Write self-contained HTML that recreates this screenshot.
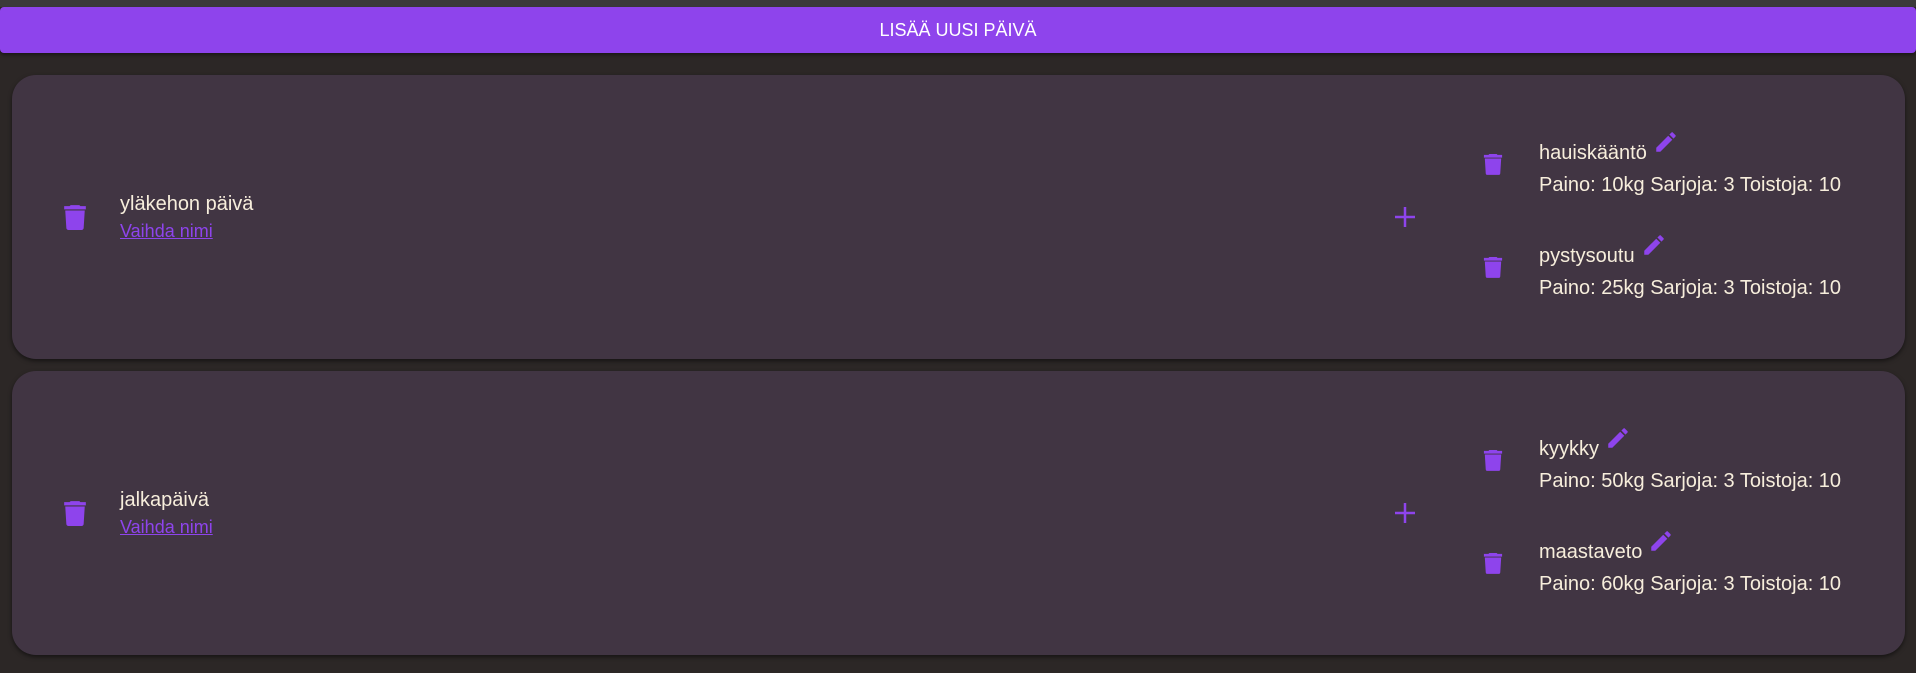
<!DOCTYPE html>
<html><head><meta charset="utf-8"><style>
*{margin:0;padding:0;box-sizing:border-box}
body{width:1916px;height:673px;background:#2c2726;font-family:"Liberation Sans",sans-serif;position:relative;overflow:hidden;color:#f7eedc}
.top{position:absolute;left:0;top:0;width:1916px;height:7px;background:#3b3a3a}
.btn{position:absolute;left:0;top:7px;width:1916px;height:46px;background:#8e44ec;border-radius:4px;color:#fff;font-size:18px;text-align:center;line-height:46px;box-shadow:0 2px 3px rgba(0,0,0,.4)}
.card{position:absolute;left:12px;width:1893px;height:284px;background:#413543;border-radius:24px;box-shadow:0 2px 4px rgba(0,0,0,.5)}
.abs{position:absolute}
.t{font-size:20px;white-space:nowrap;line-height:24px}
.link{font-size:18px;color:#8e44ec;text-decoration:underline;white-space:nowrap}
svg{position:absolute}
.t svg{position:relative;vertical-align:top;margin-left:6px;top:-12px}
</style></head><body>
<div class="top"></div>
<div class="btn">LISÄÄ UUSI PÄIVÄ</div>

<div class="card" style="top:75px">
  <svg style="left:51px;top:129px" width="24" height="26" viewBox="0 0 22 24"><path d="M7 1h8l1 1h5v3H1V2h5z M2 6h18l-1 16a2 2 0 0 1-2 2H5a2 2 0 0 1-2-2z" fill="#8e44ec"/></svg>
  <div class="abs t" style="left:108px;top:117px">yläkehon päivä</div>
  <div class="abs link" style="left:108px;top:146px">Vaihda nimi</div>
  <svg style="left:1383px;top:132px" width="20" height="20"><path d="M10 0v20M0 10h20" stroke="#8e44ec" stroke-width="2.5"/></svg>
  <svg style="left:1471px;top:77px" width="20" height="24" viewBox="0 0 22 24"><path d="M7 1h8l1 1h5v3H1V2h5z M2 6h18l-1 16a2 2 0 0 1-2 2H5a2 2 0 0 1-2-2z" fill="#8e44ec"/></svg>
  <div class="abs t" style="left:1527px;top:66px">hauiskääntö<svg width="26" height="26" viewBox="0 0 24 24"><path d="M3 17.25V21h3.75L17.81 9.94l-3.75-3.75zM20.71 7.04a1 1 0 0 0 0-1.41l-2.34-2.34a1 1 0 0 0-1.41 0l-1.83 1.83 3.75 3.75z" fill="#8e44ec"/></svg></div>
  <div class="abs t" style="left:1527px;top:98px">Paino: 10kg Sarjoja: 3 Toistoja: 10</div>
  <svg style="left:1471px;top:180px" width="20" height="24" viewBox="0 0 22 24"><path d="M7 1h8l1 1h5v3H1V2h5z M2 6h18l-1 16a2 2 0 0 1-2 2H5a2 2 0 0 1-2-2z" fill="#8e44ec"/></svg>
  <div class="abs t" style="left:1527px;top:169px">pystysoutu<svg width="26" height="26" viewBox="0 0 24 24"><path d="M3 17.25V21h3.75L17.81 9.94l-3.75-3.75zM20.71 7.04a1 1 0 0 0 0-1.41l-2.34-2.34a1 1 0 0 0-1.41 0l-1.83 1.83 3.75 3.75z" fill="#8e44ec"/></svg></div>
  <div class="abs t" style="left:1527px;top:201px">Paino: 25kg Sarjoja: 3 Toistoja: 10</div>
</div>

<div class="card" style="top:371px">
  <svg style="left:51px;top:129px" width="24" height="26" viewBox="0 0 22 24"><path d="M7 1h8l1 1h5v3H1V2h5z M2 6h18l-1 16a2 2 0 0 1-2 2H5a2 2 0 0 1-2-2z" fill="#8e44ec"/></svg>
  <div class="abs t" style="left:108px;top:117px">jalkapäivä</div>
  <div class="abs link" style="left:108px;top:146px">Vaihda nimi</div>
  <svg style="left:1383px;top:132px" width="20" height="20"><path d="M10 0v20M0 10h20" stroke="#8e44ec" stroke-width="2.5"/></svg>
  <svg style="left:1471px;top:77px" width="20" height="24" viewBox="0 0 22 24"><path d="M7 1h8l1 1h5v3H1V2h5z M2 6h18l-1 16a2 2 0 0 1-2 2H5a2 2 0 0 1-2-2z" fill="#8e44ec"/></svg>
  <div class="abs t" style="left:1527px;top:66px">kyykky<svg width="26" height="26" viewBox="0 0 24 24"><path d="M3 17.25V21h3.75L17.81 9.94l-3.75-3.75zM20.71 7.04a1 1 0 0 0 0-1.41l-2.34-2.34a1 1 0 0 0-1.41 0l-1.83 1.83 3.75 3.75z" fill="#8e44ec"/></svg></div>
  <div class="abs t" style="left:1527px;top:98px">Paino: 50kg Sarjoja: 3 Toistoja: 10</div>
  <svg style="left:1471px;top:180px" width="20" height="24" viewBox="0 0 22 24"><path d="M7 1h8l1 1h5v3H1V2h5z M2 6h18l-1 16a2 2 0 0 1-2 2H5a2 2 0 0 1-2-2z" fill="#8e44ec"/></svg>
  <div class="abs t" style="left:1527px;top:169px">maastaveto<svg width="26" height="26" viewBox="0 0 24 24"><path d="M3 17.25V21h3.75L17.81 9.94l-3.75-3.75zM20.71 7.04a1 1 0 0 0 0-1.41l-2.34-2.34a1 1 0 0 0-1.41 0l-1.83 1.83 3.75 3.75z" fill="#8e44ec"/></svg></div>
  <div class="abs t" style="left:1527px;top:201px">Paino: 60kg Sarjoja: 3 Toistoja: 10</div>
</div>
</body></html>
